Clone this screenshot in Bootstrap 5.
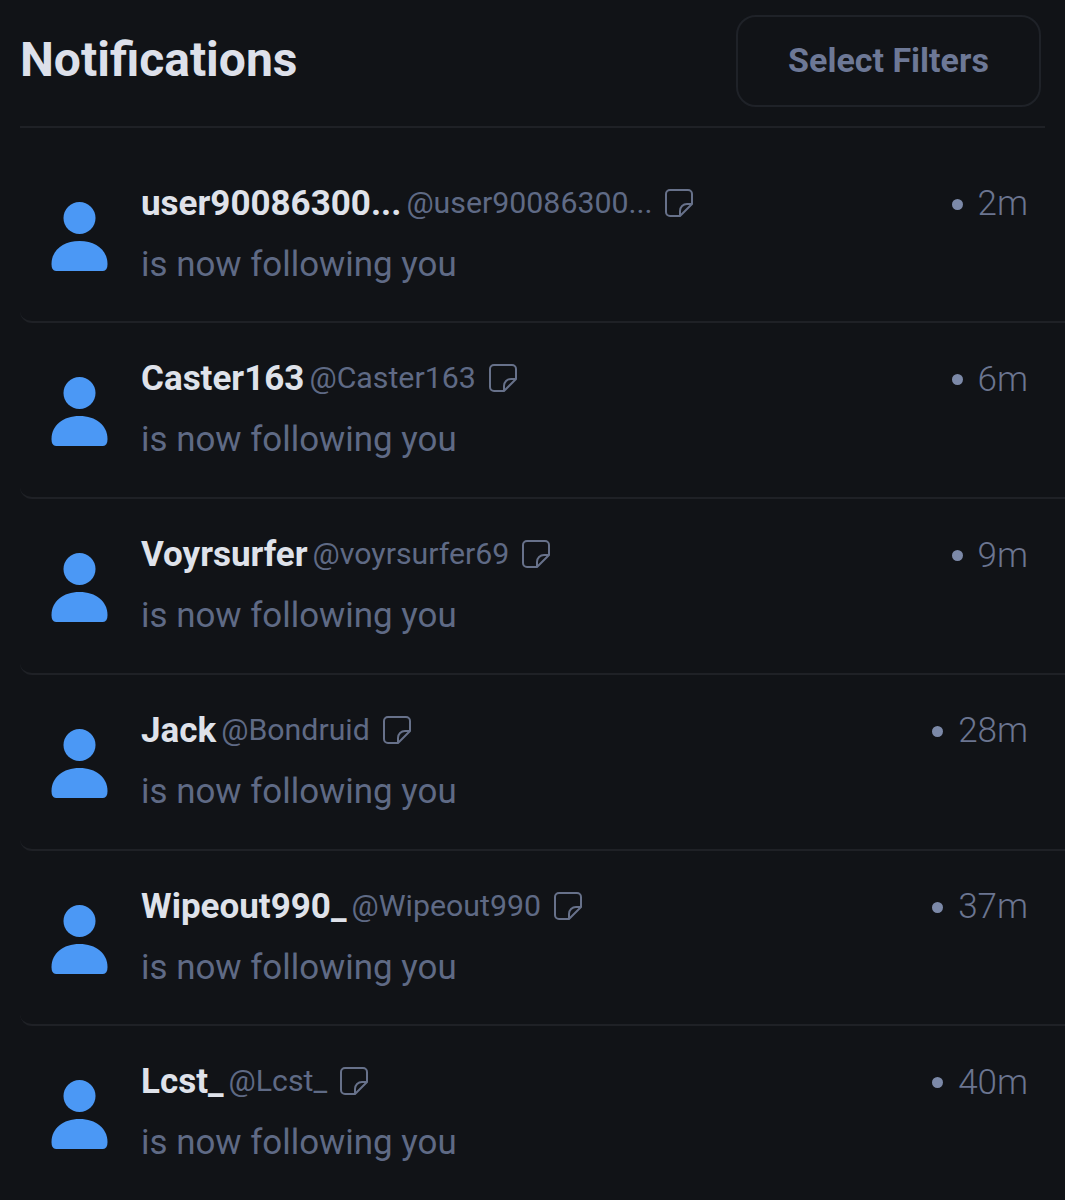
<!DOCTYPE html>
<html lang="en">
<head>
<meta charset="utf-8">
<title>Notifications</title>
<link href="https://cdn.jsdelivr.net/npm/bootstrap@5.3.0/dist/css/bootstrap.min.css" rel="stylesheet">
<style>
html,body{background:#111317;}
body{font-family:Roboto,"Liberation Sans",sans-serif;height:1200px;overflow:hidden;}
.hdr{margin:0 20px;height:128px;border-bottom:2px solid #1f2126;padding:15px 4px 20px 0;}
.hdr-title{font-size:48px;font-weight:700;color:#dde0ea;margin:0;line-height:90px;}
.filter-btn{width:305px;height:92px;border:2px solid #1f2228;border-radius:20px;background:transparent;color:#6d7896;font-size:34px;font-weight:700;line-height:1;padding:0 0 2px;}
.feed{padding-top:19.5px;margin-left:20px;}
.entry{height:175.75px;border-bottom:2px solid #1f2126;border-bottom-left-radius:12px;padding:36px 37px 0 31px;}
.entry:last-child{border-bottom:0;}
.ava{width:58px;height:70px;flex:none;margin-top:18px;margin-right:32px;fill:#4b98f5;}
.line-a{height:40px;line-height:40px;white-space:nowrap;}
.who{font-size:35px;font-weight:700;color:#dfe2ea;}
.tag{font-size:30.3px;font-weight:400;color:#5f6a85;margin-left:5px;margin-bottom:2px;}
.note{width:30px;height:30px;margin-left:12px;margin-bottom:2px;fill:none;stroke:#67718a;stroke-width:2;stroke-linejoin:round;}
.line-b{height:40px;line-height:40px;margin-top:21px;font-size:34.9px;color:#5f6a85;}
.ago{font-size:35px;font-weight:300;color:#6b7590;line-height:40px;white-space:nowrap;margin-top:.5px;}
.pip{width:11px;height:11px;border-radius:50%;background:#7c89a8;margin-right:15px;}
</style>
</head>
<body>
<svg width="0" height="0" class="position-absolute">
  <defs>
    <symbol id="person" viewBox="0 0 58 70"><circle cx="28.5" cy="16" r="16"/><path d="M0.5 62C0.5 48.5 12 39 28.5 39S56.5 48.5 56.5 62Q56.5 69 52 69H5Q0.5 69 0.5 62Z"/></symbol>
    <symbol id="sticky" viewBox="0 0 30 30"><path d="M16 28H6a4 4 0 0 1-4-4V6a4 4 0 0 1 4-4h18a4 4 0 0 1 4 4v10L16 28Z"/><path d="M16 28v-5a7 7 0 0 1 7-7h5"/></symbol>
  </defs>
</svg>

<header class="hdr d-flex justify-content-between align-items-start">
  <h1 class="hdr-title">Notifications</h1>
  <button type="button" class="btn filter-btn">Select Filters</button>
</header>

<main class="feed">
  <div class="entry d-flex">
    <svg class="ava"><use href="#person"/></svg>
    <div class="flex-grow-1">
      <div class="line-a d-flex align-items-center"><span class="who">user90086300...</span><span class="tag">@user90086300...</span><svg class="note"><use href="#sticky"/></svg></div>
      <div class="line-b">is now following you</div>
    </div>
    <div class="ago d-flex align-items-center align-self-start"><span class="pip"></span>2m</div>
  </div>
  <div class="entry d-flex">
    <svg class="ava"><use href="#person"/></svg>
    <div class="flex-grow-1">
      <div class="line-a d-flex align-items-center"><span class="who">Caster163</span><span class="tag">@Caster163</span><svg class="note"><use href="#sticky"/></svg></div>
      <div class="line-b">is now following you</div>
    </div>
    <div class="ago d-flex align-items-center align-self-start"><span class="pip"></span>6m</div>
  </div>
  <div class="entry d-flex">
    <svg class="ava"><use href="#person"/></svg>
    <div class="flex-grow-1">
      <div class="line-a d-flex align-items-center"><span class="who">Voyrsurfer</span><span class="tag">@voyrsurfer69</span><svg class="note"><use href="#sticky"/></svg></div>
      <div class="line-b">is now following you</div>
    </div>
    <div class="ago d-flex align-items-center align-self-start"><span class="pip"></span>9m</div>
  </div>
  <div class="entry d-flex">
    <svg class="ava"><use href="#person"/></svg>
    <div class="flex-grow-1">
      <div class="line-a d-flex align-items-center"><span class="who">Jack</span><span class="tag">@Bondruid</span><svg class="note"><use href="#sticky"/></svg></div>
      <div class="line-b">is now following you</div>
    </div>
    <div class="ago d-flex align-items-center align-self-start"><span class="pip"></span>28m</div>
  </div>
  <div class="entry d-flex">
    <svg class="ava"><use href="#person"/></svg>
    <div class="flex-grow-1">
      <div class="line-a d-flex align-items-center"><span class="who">Wipeout990_</span><span class="tag">@Wipeout990</span><svg class="note"><use href="#sticky"/></svg></div>
      <div class="line-b">is now following you</div>
    </div>
    <div class="ago d-flex align-items-center align-self-start"><span class="pip"></span>37m</div>
  </div>
  <div class="entry d-flex">
    <svg class="ava"><use href="#person"/></svg>
    <div class="flex-grow-1">
      <div class="line-a d-flex align-items-center"><span class="who">Lcst_</span><span class="tag">@Lcst_</span><svg class="note"><use href="#sticky"/></svg></div>
      <div class="line-b">is now following you</div>
    </div>
    <div class="ago d-flex align-items-center align-self-start"><span class="pip"></span>40m</div>
  </div>
</main>
<script src="https://cdn.jsdelivr.net/npm/bootstrap@5.3.0/dist/js/bootstrap.bundle.min.js"></script>
</body>
</html>
